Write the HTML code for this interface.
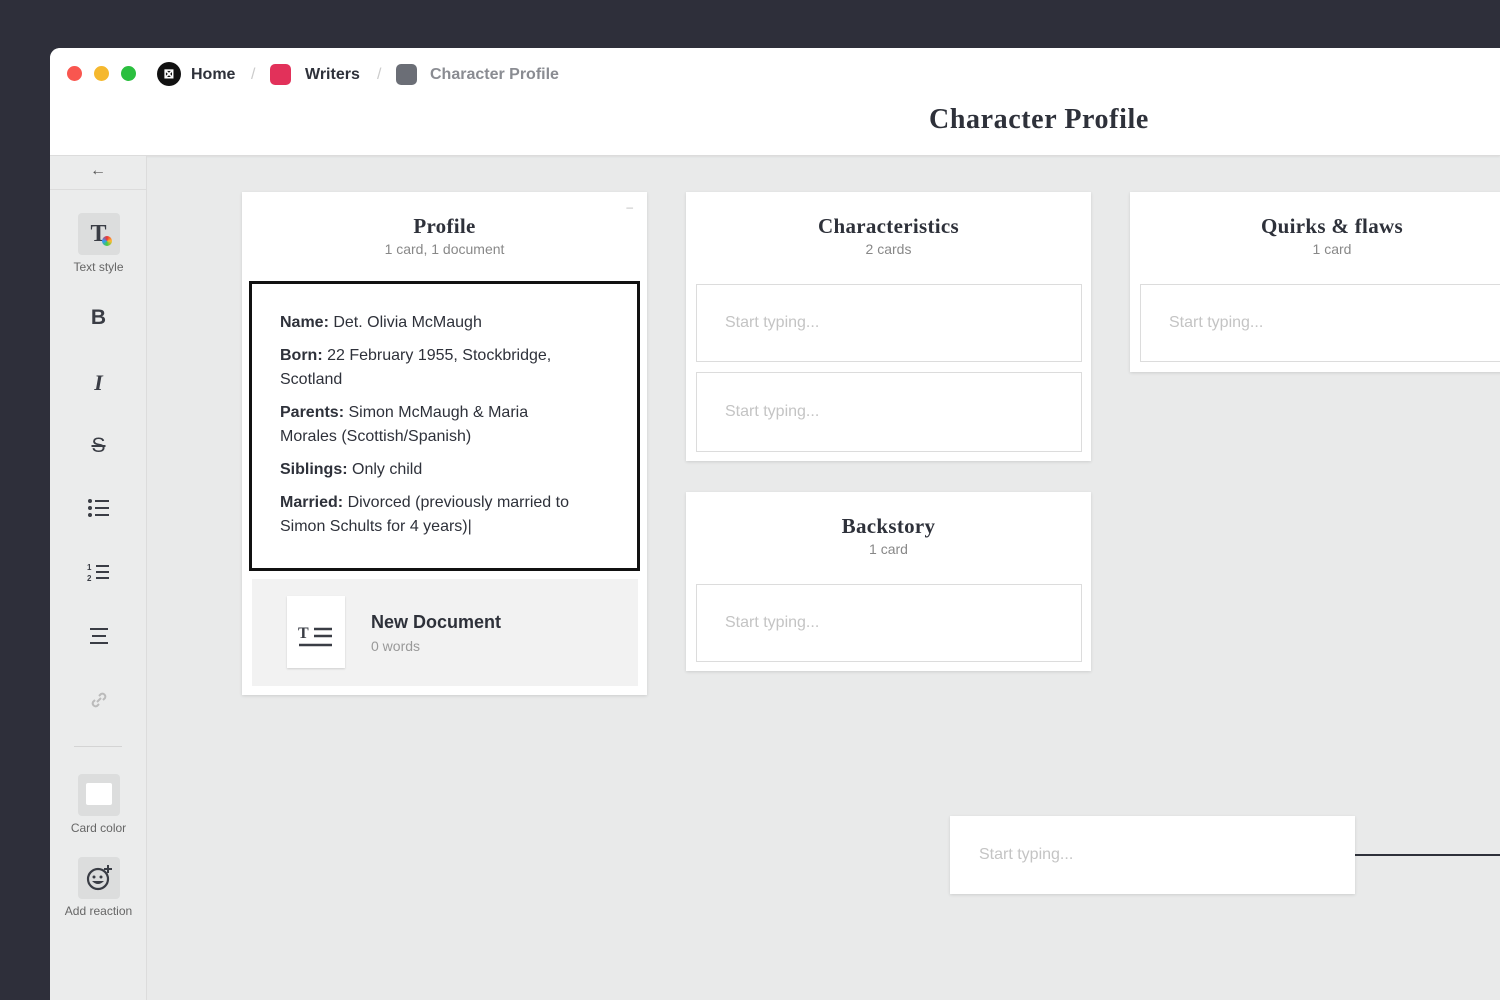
<!DOCTYPE html>
<html><head><style>
*{box-sizing:border-box;margin:0;padding:0}
body{width:1500px;height:1000px;background:#2e2f3a;position:relative;overflow:hidden;font-family:"Liberation Sans",sans-serif}
.win{position:absolute;left:50px;top:48px;width:1450px;height:952px;background:#e9eaea;border-top-left-radius:10px;overflow:hidden}
.hdr{position:absolute;left:0;top:0;width:1450px;height:108px;background:#fff;border-bottom:1px solid #dcdcdc;box-shadow:0 1px 2px rgba(0,0,0,.06)}
.dot{position:absolute;top:18px;width:15px;height:15px;border-radius:50%}
.crumb{position:absolute;top:18px;font-size:16px;font-weight:bold;color:#2e313a}
.sq{position:absolute;top:16px;width:21px;height:21px;border-radius:5px}
.sep{position:absolute;top:18px;color:#ccc;font-size:16px}
.title{position:absolute;left:879px;top:56px;font-family:"Liberation Serif",serif;font-weight:bold;font-size:28px;color:#2e313a;letter-spacing:0.6px}
.side{position:absolute;left:0;top:108px;width:97px;height:844px;background:#ebecec;border-right:1px solid #dcdcdc}
.ico{position:absolute;left:0;width:97px;text-align:center;color:#3a3d45}
.lbl{font-size:12px;color:#666}
.box{width:42px;height:42px;background:#dcdddd;border-radius:4px;margin:0 auto 5px;position:relative}
.col{position:absolute;background:#fff;box-shadow:0 1px 3px rgba(0,0,0,.12)}
.ch{text-align:center;font-family:"Liberation Serif",serif;font-weight:bold;font-size:21px;color:#2e313a;padding-top:22px;letter-spacing:0.3px}
.cs{text-align:center;font-size:14px;color:#888;margin-top:2px}
.ph{position:absolute;border:1px solid #dcdcdc;background:#fff;color:#c4c4c4;font-size:16px;padding-left:28px;display:flex;align-items:center}
.txt p{font-size:16px;line-height:24px;color:#2e313a;margin-bottom:9px}
</style></head><body>
<div class="win">
 <div class="hdr">
  <div class="dot" style="left:17px;background:#f9564f"></div>
  <div class="dot" style="left:44px;background:#f5b82e"></div>
  <div class="dot" style="left:71px;background:#2bbf3f"></div>
  <div style="position:absolute;left:107px;top:14px;width:24px;height:24px;border-radius:50%;background:#111;color:#fff;font-size:13px;text-align:center;line-height:24px;font-weight:bold">⊠</div>
  <div class="crumb" style="left:141px">Home</div>
  <div class="sep" style="left:201px">/</div>
  <div class="sq" style="left:220px;background:#e2315a"></div>
  <div class="crumb" style="left:255px">Writers</div>
  <div class="sep" style="left:327px">/</div>
  <div class="sq" style="left:346px;background:#6b6e76"></div>
  <div class="crumb" style="left:380px;color:#8a8c92">Character Profile</div>
  <div class="title">Character Profile</div>
 </div>
 <div class="side">
  <div style="height:34px;border-bottom:1px solid #dcdcdc;text-align:center;line-height:30px;color:#555;font-size:16px">←</div>
  <div class="ico" style="top:57px"><div class="box"><span style="font-family:'Liberation Serif',serif;font-weight:bold;font-size:24px;line-height:42px;color:#3a3d45">T</span><span style="position:absolute;left:24px;top:23px;width:10px;height:10px;border-radius:50%;background:conic-gradient(#e33,#fb3,#4c4,#39f,#e33)"></span></div><div class="lbl">Text style</div></div>
  <div class="ico" style="top:150px;font-size:21px;font-weight:bold">B</div>
  <div class="ico" style="top:214px;font-size:22px;font-weight:bold;font-style:italic;font-family:'Liberation Serif',serif">I</div>
  <div class="ico" style="top:278px;font-size:21px;text-decoration:line-through">S</div>
  <div class="ico" style="top:342px"><svg width="24" height="20"><circle cx="3" cy="3" r="2" fill="#3a3d45"/><circle cx="3" cy="10" r="2" fill="#3a3d45"/><circle cx="3" cy="17" r="2" fill="#3a3d45"/><path d="M8 3h14M8 10h14M8 17h14" stroke="#3a3d45" stroke-width="2"/></svg></div>
  <div class="ico" style="top:405px"><svg width="24" height="22"><text x="0" y="9" font-size="8" font-weight="bold" fill="#3a3d45">1</text><text x="0" y="20" font-size="8" font-weight="bold" fill="#3a3d45">2</text><path d="M9 5h13M9 11h13M9 17h13" stroke="#3a3d45" stroke-width="2"/></svg></div>
  <div class="ico" style="top:471px"><svg width="22" height="20"><path d="M2 2h18M4 9h14M2 16h18" stroke="#3a3d45" stroke-width="2"/></svg></div>
  <div class="ico" style="top:532px"><svg width="24" height="24"><path d="M10 14l4-4M8 12l-2 2a3 3 0 004 4l2-2M16 12l2-2a3 3 0 00-4-4l-2 2" stroke="#bbb" stroke-width="2" fill="none"/></svg></div>
  <div style="position:absolute;left:24px;top:590px;width:48px;border-top:1px solid #d4d4d4"></div>
  <div class="ico" style="top:618px"><div class="box"><div style="position:absolute;left:8px;top:9px;width:26px;height:22px;background:#fff;border-radius:2px"></div></div><div class="lbl">Card color</div></div>
  <div class="ico" style="top:701px"><div class="box"><svg width="30" height="30" style="margin-top:6px"><circle cx="14" cy="16" r="10" stroke="#3a3d45" stroke-width="2.2" fill="none"/><circle cx="10" cy="14" r="1.5" fill="#3a3d45"/><circle cx="17" cy="14" r="1.5" fill="#3a3d45"/><path d="M8 18q6 6 12 0z" fill="#3a3d45"/><path d="M24 2v8M20 6h8" stroke="#3a3d45" stroke-width="2"/></svg></div><div class="lbl">Add reaction</div></div>
 </div>

 <div class="col" style="left:192px;top:144px;width:405px;height:503px">
  <div style="position:absolute;right:14px;top:8px;color:#bbb;font-size:12px">–</div>
  <div class="ch">Profile</div><div class="cs">1 card, 1 document</div>
  <div class="txt" style="position:absolute;left:7px;top:89px;width:391px;height:290px;border:3px solid #111;padding:27px 55px 26px 28px">
   <p><b>Name:</b> Det. Olivia McMaugh</p>
   <p><b>Born:</b> 22 February 1955, Stockbridge, Scotland</p>
   <p><b>Parents:</b> Simon McMaugh &amp; Maria Morales (Scottish/Spanish)</p>
   <p><b>Siblings:</b> Only child</p>
   <p><b>Married:</b> Divorced (previously married to Simon Schults for 4 years)|</p>
  </div>
  <div style="position:absolute;left:10px;top:387px;width:386px;height:107px;background:#f2f2f2">
   <div style="position:absolute;left:35px;top:17px;width:58px;height:72px;background:#fff;box-shadow:0 1px 2px rgba(0,0,0,.15)"><svg width="58" height="72"><text x="11" y="42" font-family="Liberation Serif" font-weight="bold" font-size="16" fill="#3a3d45">T</text><path d="M27 33h18M27 40h18M12 49h33" stroke="#3a3d45" stroke-width="2.5"/></svg></div>
   <div style="position:absolute;left:119px;top:33px;font-size:18px;font-weight:bold;color:#2e313a">New Document</div>
   <div style="position:absolute;left:119px;top:59px;font-size:14px;color:#999">0 words</div>
  </div>
 </div>

 <div class="col" style="left:636px;top:144px;width:405px;height:269px">
  <div class="ch">Characteristics</div><div class="cs">2 cards</div>
  <div class="ph" style="left:10px;top:92px;width:386px;height:78px">Start typing...</div>
  <div class="ph" style="left:10px;top:180px;width:386px;height:80px">Start typing...</div>
 </div>
 <div class="col" style="left:1080px;top:144px;width:380px;height:180px">
  <div class="ch" style="padding-left:24px">Quirks &amp; flaws</div><div class="cs" style="padding-left:24px">1 card</div>
  <div class="ph" style="left:10px;top:92px;width:380px;height:78px">Start typing...</div>
 </div>
 <div class="col" style="left:636px;top:444px;width:405px;height:179px">
  <div class="ch">Backstory</div><div class="cs">1 card</div>
  <div class="ph" style="left:10px;top:92px;width:386px;height:78px">Start typing...</div>
 </div>
 <div class="col" style="left:900px;top:768px;width:405px;height:78px;display:flex;align-items:center;padding-left:29px;color:#c4c4c4;font-size:16px">Start typing...</div>
 <div style="position:absolute;left:1305px;top:806px;width:150px;border-top:2px solid #2e313a"></div>
</div>
</body></html>
